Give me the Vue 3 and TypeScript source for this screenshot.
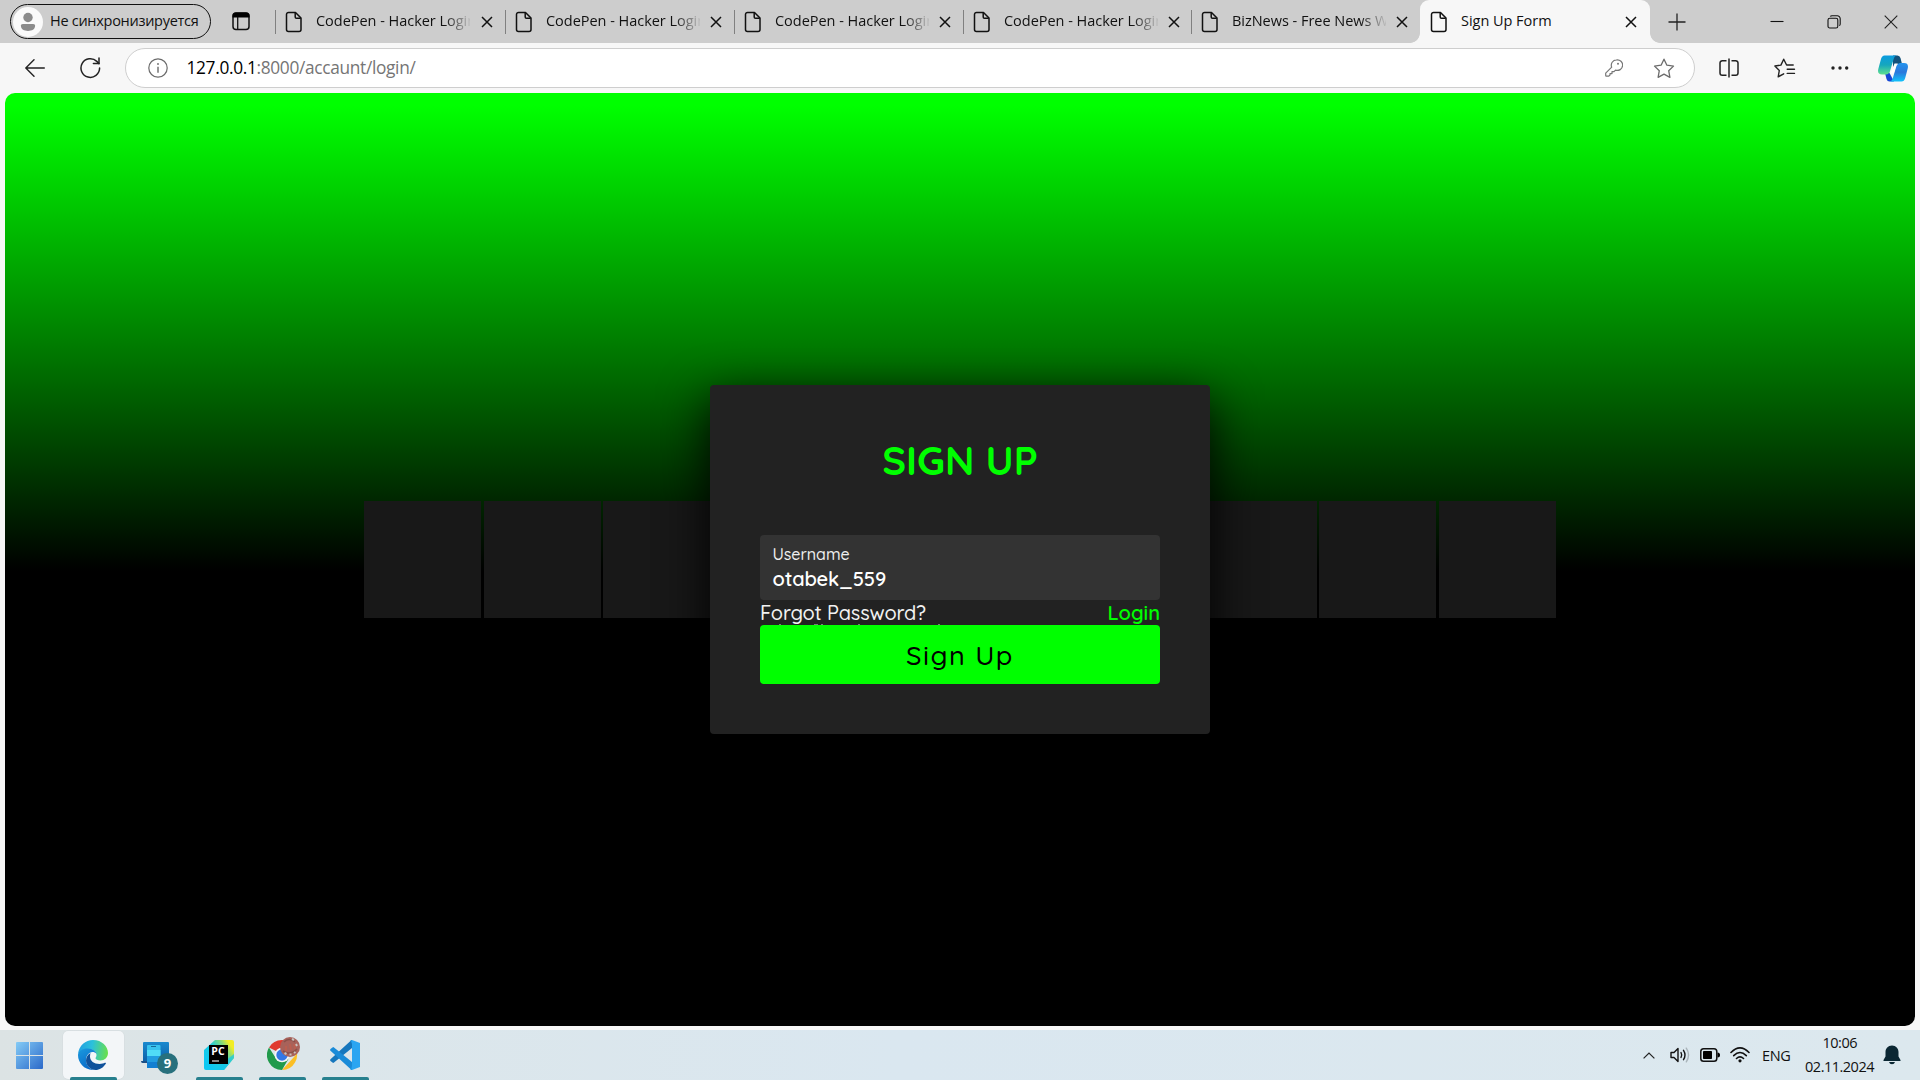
<script setup lang="ts">
interface Tab {
  title: string
  width: number
  active?: boolean
}

const tabs: Tab[] = [
  { title: 'CodePen - Hacker Login', width: 230 },
  { title: 'CodePen - Hacker Login', width: 229 },
  { title: 'CodePen - Hacker Login', width: 229 },
  { title: 'CodePen - Hacker Login', width: 228 },
  { title: 'BizNews - Free News Website', width: 229 },
  { title: 'Sign Up Form', width: 230, active: true },
]
</script>

<template>
  <div class="screen">
    <header class="tabstrip">
      <div class="profile">
        <svg class="avatar" width="30" height="30" viewBox="0 0 30 30">
          <circle cx="15" cy="15" r="15" fill="#fafafa" />
          <circle cx="15" cy="10.500" r="4.700" fill="#8b8b8b" />
          <path d="M9.800 17h10.400c1.200 0 1.900.7 1.900 1.800 0 3.400-3.200 5.200-7.100 5.200s-7.100-1.800-7.100-5.200c0-1.100.7-1.800 1.900-1.800z" fill="#8b8b8b" />
        </svg>
        <span class="profile-name">Не синхронизируется</span>
      </div>
      <svg class="workspace" width="18" height="19" viewBox="0 0 18 19" fill="none">
        <rect x="1" y="1" width="16" height="16.600" rx="3" stroke="#111" stroke-width="1.500" />
        <path d="M.5 5.500V4a3.500 3.500 0 0 1 3.500-3.500h10A3.500 3.500 0 0 1 17.500 4v1.500z" fill="#000" />
        <path d="M5.700 5v12" stroke="#111" stroke-width="1.300" />
      </svg>
      <div class="tabs">
        <div v-for="(tab, i) in tabs" :key="i" class="tab" :class="{ active: tab.active }" :style="{ width: tab.width + 'px' }">
          <svg class="file" width="18" height="22" viewBox="0 0 18 22" fill="none" stroke="#111" stroke-width="1.500" stroke-linejoin="round">
            <path d="M3.500 1.500h7L16 7v11.500a2 2 0 0 1-2 2H3.500a2 2 0 0 1-2-2v-15a2 2 0 0 1 2-2z" />
            <path d="M10.200 1.700V6a1.300 1.300 0 0 0 1.300 1.300h4.300" />
          </svg>
          <span class="tab-title">{{ tab.title }}</span>
          <svg class="close" width="12" height="12" viewBox="0 0 12 12" stroke="#111" stroke-width="1.500">
            <path d="M1 1l10 10M11 1L1 11" />
          </svg>
        </div>
      </div>
      <svg class="plus" width="18" height="18" viewBox="0 0 18 18" stroke="#222" stroke-width="1.300">
        <path d="M9 .5v17M.5 9h17" />
      </svg>
      <div class="window-controls">
        <svg width="14" height="14" viewBox="0 0 14 14" stroke="#111" stroke-width="1.100"><path d="M.5 6.500h13" /></svg>
        <svg width="14" height="14" viewBox="0 0 14 14" fill="none" stroke="#111" stroke-width="1.100">
          <rect x="1" y="3.200" width="9.800" height="9.800" rx="1.800" />
          <path d="M3.300 1.600Q3.700.8 5 .8h5.200a3 3 0 0 1 3 3v5.100q0 1-.9 1.700" />
        </svg>
        <svg width="14" height="14" viewBox="0 0 14 14" stroke="#222" stroke-width="1.100"><path d="M.7.7l12.600 12.600M13.300.7L.7 13.300" /></svg>
      </div>
    </header>

    <div class="toolbar">
      <svg class="back" width="20" height="18" viewBox="0 0 20 18" fill="none" stroke="#222" stroke-width="1.400" stroke-linecap="round" stroke-linejoin="round">
        <path d="M9 .8L.8 9 9 17.200M1 9h18.300" />
      </svg>
      <svg class="reload" width="21" height="22" viewBox="0 0 21 22" fill="none" stroke="#222" stroke-width="1.500" stroke-linecap="round" stroke-linejoin="round">
        <path d="M19.600 11a9.300 9.300 0 1 1-2.800-6.600L19 6.600" />
        <path d="M19 1v5.600h-5.600" />
      </svg>
      <div class="address">
        <svg class="info" width="20" height="20" viewBox="0 0 20 20" fill="none" stroke="#6b6b6b" stroke-width="1.200">
          <circle cx="10" cy="10" r="9.200" />
          <path d="M10 8.700v6" stroke-width="1.400" />
          <circle cx="10" cy="6" r=".9" fill="#6b6b6b" stroke="none" />
        </svg>
        <span class="url"><b>127.0.0.1</b>:8000/accaunt/login/</span>
        <svg class="key" width="18" height="18" viewBox="0 0 18 18" fill="none" stroke="#777" stroke-width="1.200" stroke-linejoin="round">
          <path d="M11.500.9a5.300 5.300 0 1 1-1 10.200l-1.500 1.500H7v2H5V16l-1.200 1.200H1.300q-.6 0-.6-.6v-2.400l6-6A5.300 5.300 0 0 1 11.500.9z" />
          <circle cx="13" cy="4.800" r="1" fill="#777" stroke="none" />
        </svg>
        <svg class="star" width="22" height="21" viewBox="0 0 22 21" fill="none" stroke="#6b6b6b" stroke-width="1.300" stroke-linejoin="round">
          <path d="M11 1.200l2.900 6 6.600.9-4.800 4.600 1.200 6.600-5.900-3.100-5.900 3.100 1.200-6.600L1.500 8.100l6.600-.9z" />
        </svg>
      </div>
      <div class="actions">
        <svg width="20" height="20" viewBox="0 0 20 20" fill="none" stroke="#222" stroke-width="1.500">
          <path d="M7.500 2.700H3.300A2.300 2.300 0 0 0 1 5v10a2.300 2.300 0 0 0 2.300 2.300h4.200M12.500 2.700h4.200A2.300 2.300 0 0 1 19 5v10a2.300 2.300 0 0 1-2.300 2.300h-4.200M10 .5v19" />
        </svg>
        <svg width="22" height="20" viewBox="0 0 22 20" fill="none" stroke="#222" stroke-width="1.400" stroke-linejoin="round" stroke-linecap="round">
          <path d="M9.700 15.800l-5.500 3 1.100-6.300L.9 8l6-.9L9.700 1.200 12.600 7h6.600M13.200 11.300h7.300M13.200 15.400h7.300" />
        </svg>
        <svg width="18" height="4" viewBox="0 0 18 4" fill="#222"><circle cx="2" cy="2" r="1.700" /><circle cx="9" cy="2" r="1.700" /><circle cx="15.700" cy="2" r="1.700" /></svg>
        <svg width="30" height="27" viewBox="0 0 30 27">
          <defs>
            <linearGradient id="cpA" x1="0" y1="0" x2="0" y2="1"><stop offset="0" stop-color="#0a9be0" /><stop offset=".5" stop-color="#16a7bd" /><stop offset="1" stop-color="#5fe08e" /></linearGradient>
            <linearGradient id="cpB" x1="0" y1="0" x2="0" y2="1"><stop offset="0" stop-color="#2494ee" /><stop offset=".5" stop-color="#2a78dc" /><stop offset="1" stop-color="#12c3fa" /></linearGradient>
          </defs>
          <path d="M15 .5h4.500q2.300 0 3 2.500l1.500 6h-5l-4 3z" fill="#13527c" />
          <path d="M7 18l4-1 5 9.500h-4.500q-2.300 0-3-2.500z" fill="#1748d5" />
          <path d="M6.500.5H19q-2.500 0-3.500 4l-3 10q-1 5-5 5H4q-5 0-3.700-5.500L3 4Q4 .5 6.500.5z" fill="url(#cpA)" />
          <path d="M23.500 26.500H11.500q2.500 0 3.500-4l3-10q1-4.500 4.500-4.500H26q5 0 3.700 5.500L27.200 23q-1 3.500-3.700 3.500z" fill="url(#cpB)" />
          <path d="M16.500 8.500h3.500q-1.500.8-2.200 3.300l-2 6.700h-3.800q1.300-1 2-3.500z" fill="#fff" />
        </svg>
      </div>
    </div>

    <main class="viewport">
      <div class="page">
        <div class="squares"><span v-for="n in 10" :key="n" class="square"></span></div>
        <section class="card">
          <h2>SIGN UP</h2>
          <div class="field">
            <label>Username</label>
            <span class="value">otabek_559</span>
          </div>
          <div class="links">
            <a class="forgot">Forgot Password?</a>
            <a class="login">Login</a>
          </div>
          <button class="submit">Sign Up</button>
          <!-- tops of the hint line hidden behind the button -->
          <svg class="hint" width="200" height="1" viewBox="0 0 200 1" fill="#7c7c7c">
            <path d="M19 0h2v1h-2zM54 0h4v1h-4zM61 0h2v1h-2zM98 0h2v1h-2zM178 0h2v1h-2z" />
          </svg>
        </section>
      </div>
    </main>

    <footer class="taskbar">
      <div class="apps">
        <div class="app start">
          <svg width="27" height="27" viewBox="0 0 27 27">
            <defs><linearGradient id="win" gradientUnits="userSpaceOnUse" x1="0" y1="0" x2="27" y2="27"><stop offset="0" stop-color="#84cbf6" /><stop offset="1" stop-color="#2b69c9" /></linearGradient></defs>
            <path d="M1 0h12v13H0V1q0-1 1-1zM14 0h12q1 0 1 1v12H14zM0 14h13v13H1q-1 0-1-1zM14 14h13v12q0 1-1 1H14z" fill="url(#win)" />
          </svg>
        </div>
        <div class="app running focused">
          <svg class="edge" width="30" height="30" viewBox="0 0 30 30">
            <defs>
              <linearGradient id="edA" x1="0" y1=".4" x2="1" y2=".5"><stop offset="0" stop-color="#209fe0" /><stop offset=".45" stop-color="#2bc0dc" /><stop offset="1" stop-color="#69e04b" /></linearGradient>
              <linearGradient id="edB" x1="0" y1="0" x2=".5" y2="1"><stop offset="0" stop-color="#1b9ade" /><stop offset="1" stop-color="#0a6ac8" /></linearGradient>
            </defs>
            <path d="M0 14C1 5.500 7.500 0 15 0c9 0 15 6.500 15 13 0 4.500-3.500 7.500-7.500 7.500-3 0-5-1-5-2.200 0-.8 1-1.300 1-3.300 0-3-3-6-8-6C5 9 1 11.500 0 14z" fill="url(#edA)" />
            <path d="M0 15c0-4 4.500-6.500 9.500-6.500 5.500 0 8.500 3 9 5.500-1-1.500-2.500-2-4-2C11 12 8 16 8 20c0 5 3.500 9 8.500 10C7 30.500 0 23.500 0 15z" fill="url(#edB)" />
            <path d="M12.500 13c-2.500 1.500-4.500 4-4.500 7.500 0 5.500 5 9.500 9.500 9.500 4 0 8-2.500 10.300-6.300.4-.7-.3-1.300-1-.9-1 .6-3 1.200-5.300 1.200-5.500 0-9.500-3-9.500-7.500 0-1.400.3-2.600.5-3.500z" fill="#10529b" />
          </svg>
        </div>
        <div class="app phone">
          <svg width="38" height="34" viewBox="0 0 38 34">
            <defs><linearGradient id="ph" x1="0" y1="0" x2="0" y2="1"><stop offset="0" stop-color="#1989cf" /><stop offset="1" stop-color="#0d5fa6" /></linearGradient></defs>
            <rect x="2" y="2" width="26" height="20" rx="1" fill="url(#ph)" />
            <path d="M0 21h10v2H1.500Q0 23 0 21z" fill="#1c4f86" />
            <rect x="6" y="5" width="13.500" height="23" rx="1" fill="#39c3ee" />
            <rect x="6" y="10" width="13.500" height="6" fill="#50dcf7" />
            <rect x="6" y="16" width="13.500" height="6" fill="#219de1" />
            <rect x="6" y="22" width="13.500" height="6" fill="#127fd2" />
            <path d="M10 6.500h5" stroke="#176b99" />
          </svg>
          <span class="badge">9</span>
        </div>
        <div class="app running">
          <svg class="edge" width="30" height="30" viewBox="0 0 30 30">
            <defs><linearGradient id="py" x1=".1" y1=".7" x2="1" y2=".1"><stop offset="0" stop-color="#0ec8f2" /><stop offset=".4" stop-color="#1fcddb" /><stop offset=".7" stop-color="#8bdd75" /><stop offset=".88" stop-color="#f2ed25" /></linearGradient></defs>
            <path d="M11 0h17q2 0 2 2v16L20 30H2q-2 0-2-2V10z" fill="url(#py)" />
            <path d="M30 14v4L20 30h-8l8-8z" fill="#12c6ee" opacity=".7" />
            <rect x="5" y="5" width="19" height="19" />
            <text x="7.300" y="15.300" class="pc">PC</text>
            <path d="M8 21h7" stroke="#ddd" stroke-width="1.200" />
          </svg>
        </div>
        <div class="app running">
          <svg class="chrome" width="34" height="34" viewBox="0 0 34 34">
            <path d="M15 18L2 11.500A15 15 0 0 1 28 11.500z" fill="#e03a2f" />
            <path d="M15 19H28.800L15 34a15 15 0 0 0 13-22.500H15z" fill="#fbbf26" />
            <path d="M2 11.500A15 15 0 0 0 15 34l6.500-11.300L9 22.500z" fill="#219a4b" />
            <circle cx="15" cy="19" r="7.300" fill="#f6f6f6" />
            <circle cx="15" cy="19" r="5.700" fill="#3478e5" />
            <circle cx="23" cy="11" r="10" fill="#a8625a" />
            <path d="M17 6q5-5 11 0M16 15q7 5 14-2" fill="none" stroke="#8a5049" stroke-width="1.600" />
            <path d="M19 10v5M23 8l1 6M27 8l1 5" fill="none" stroke="#bb5f50" stroke-width="2" />
            <path d="M17.500 17l2 1M22.500 18.500h2M27 17l1.500-1M25 3l2 1M29 8l1 2" stroke="#c9c2be" stroke-width="2" />
          </svg>
        </div>
        <div class="app running">
          <svg class="edge" width="30" height="30" viewBox="0 0 30 30">
            <path d="M22 0l8 3v24l-8 3z" fill="#2ba5f1" />
            <path d="M22 0v8L4 22.600q-.8.600-1.500 0L.5 20.900q-.8-.8 0-1.600L21 .5z" fill="#1677bd" />
            <path d="M22 30v-8L4 7.400q-.8-.6-1.500 0L.5 9.100q-.8.800 0 1.600L21 29.500z" fill="#1a8bd8" />
            <path d="M22 0q-1 0-1.600.6L22 4zM22 30q-1 0-1.600-.6L22 26z" fill="#209be7" />
          </svg>
        </div>
      </div>
      <div class="tray">
        <svg class="chev" width="12" height="7" viewBox="0 0 12 7" fill="none" stroke="#222" stroke-width="1.200"><path d="M.6 6.400L6 1l5.400 5.400" /></svg>
        <svg class="speaker" width="20" height="16" viewBox="0 0 20 16" fill="none" stroke="#111" stroke-width="1.400" stroke-linejoin="round" stroke-linecap="round">
          <path d="M1 5.500h3l4-4v13l-4-4H1zM11 5.500q1.400 2.500 0 5M13.500 3.300q3 4.700 0 9.400" />
          <path d="M16.300 1.200q4.500 6.800 0 13.600" stroke="#aab4ba" />
        </svg>
        <svg class="battery" width="20" height="14" viewBox="0 0 20 14"><rect x=".8" y=".8" width="16" height="12.400" rx="2.800" fill="none" stroke="#111" stroke-width="1.500" /><rect x="3" y="3" width="9" height="8" rx=".8" /><path d="M17.500 4.500q2.500 0 2.500 2.500t-2.500 2.500z" /></svg>
        <svg class="wifi" width="20" height="16" viewBox="0 0 20 16" fill="none" stroke="#111" stroke-width="1.600" stroke-linecap="round">
          <path d="M1 5.500Q10-3.800 19 5.500M3.700 8.600q6.300-6.200 12.600 0M6.500 11.500q3.500-3.200 7 0" /><circle cx="10" cy="13.800" r="1.600" fill="#111" stroke="none" />
        </svg>
        <span class="lang">ENG</span>
        <div class="clock"><span class="time">10:06</span><span class="date">02.11.2024</span></div>
        <svg class="bell" width="18" height="20" viewBox="0 0 18 20" fill="#0b2733"><path d="M9 .5c4 0 6.500 3 6.500 6.500v4.500l2 3.500v1H.5v-1l2-3.500V7C2.500 3.500 5 .5 9 .5zM6 17h6q-.6 2.200-3 2.200T6 17z" /></svg>
      </div>
    </footer>
  </div>
</template>

<style>
body { margin: 0; overflow: hidden; }
</style>

<style scoped>
.screen {
  width: 1920px;
  height: 1080px;
  display: flex;
  flex-direction: column;
  background: #f7f7f7;
  font-family: "Segoe UI", "Open Sans", "Noto Sans", sans-serif;
  color: #111;
  overflow: hidden;
}
svg { display: block; flex: none; }
span, label, a { white-space: nowrap; }

.tabstrip {
  height: 43px;
  flex: none;
  display: flex;
  align-items: center;
  background: #cdcdcd;
}
.profile {
  box-sizing: border-box;
  width: 201px;
  height: 35px;
  margin-left: 10px;
  border: 1px solid #111;
  border-radius: 18px;
  display: flex;
  align-items: center;
}
.avatar { margin-left: 2px; }
.profile-name { margin-left: 7px; padding-bottom: 2px; font-size: 14.5px; letter-spacing: -0.28px; }
.workspace { margin-left: 21px; }
.tabs { display: flex; margin-left: 25px; align-self: stretch; }
.tab {
  position: relative;
  box-sizing: border-box;
  display: flex;
  align-items: center;
  padding-left: 10px;
}
.tab:not(.active)::before {
  content: "";
  position: absolute;
  left: 0;
  top: 10px;
  width: 1px;
  height: 24px;
  background: #808080;
}
.tab.active {
  background: #f7f7f7;
  border-radius: 9px 9px 0 0;
}
.tab.active::before,
.tab.active::after {
  content: "";
  position: absolute;
  bottom: 0;
  width: 10px;
  height: 10px;
}
.tab.active::before { left: -10px; background: radial-gradient(circle at 0 0, transparent 9.5px, #f7f7f7 10.2px); }
.tab.active::after { right: -10px; background: radial-gradient(circle at 100% 0, transparent 9.5px, #f7f7f7 10.2px); }
.tab-title {
  width: 154px;
  margin-left: 13px;
  padding-bottom: 2px;
  overflow: hidden;
  font-size: 14.5px;
  letter-spacing: -0.03px;
  -webkit-mask-image: linear-gradient(90deg, #000 128px, transparent 156px);
  mask-image: linear-gradient(90deg, #000 128px, transparent 156px);
}
.tab.active .tab-title { -webkit-mask-image: none; mask-image: none; }
.close { margin-left: 10px; }
.tab:first-child .close { margin-left: 11px; }
.plus { margin-left: 18px; }
.window-controls { display: flex; margin-left: 83.500px; gap: 43px; }

.toolbar { height: 50px; flex: none; display: flex; align-items: center; }
.back { margin-left: 25px; }
.reload { margin-left: 35px; }
.address {
  box-sizing: border-box;
  width: 1570px;
  height: 40px;
  margin-left: 24px;
  border: 1px solid #cecece;
  border-radius: 20px;
  background: #fff;
  display: flex;
  align-items: center;
}
.info { margin-left: 22px; }
.url { margin-left: 18.500px; padding-bottom: 1px; flex: 1; font-size: 17.3px; color: #757575; letter-spacing: -0.32px; }
.url b { font-weight: 400; color: #000; }
.key { margin-right: 30px; }
.star { margin-right: 19px; }
.actions { display: flex; align-items: center; margin-left: 24px; }
.actions svg:nth-child(2) { margin-left: 35px; }
.actions svg:nth-child(3) { margin-left: 35px; }
.actions svg:nth-child(4) { margin-left: 29px; }

.viewport { height: 937px; flex: none; padding: 0 5px; box-sizing: border-box; }
.page {
  position: relative;
  height: 932.500px;
  border-radius: 10px;
  overflow: hidden;
  background: linear-gradient(#0f0 12px, #000 478px);
  display: flex;
  align-items: center;
  justify-content: center;
}
.squares {
  position: absolute;
  top: 408px;
  left: 359.2px;
  display: flex;
  gap: 2.375px;
}
.square { width: 117px; height: 117px; background: #181818; }
.card {
  position: relative;
  box-sizing: border-box;
  width: 500px;
  height: 349px;
  padding: 50px;
  border-radius: 4px;
  background: #222;
  box-shadow: 0 15px 50px #000;
  display: flex;
  flex-direction: column;
  font-family: Quicksand, Lato, sans-serif;
}
h2 {
  margin: 0;
  height: 50px;
  line-height: 50px;
  text-align: center;
  font-size: 40px;
  font-weight: 700;
  color: #0f0;
}
.field {
  box-sizing: border-box;
  height: 65px;
  margin-top: 50px;
  padding: 8px 12px 0 12.500px;
  border-radius: 4px;
  background: #333;
  display: flex;
  flex-direction: column;
}
.field label { font-size: 16px; line-height: 23px; color: #eee; font-weight: 500; letter-spacing: -0.05px; }
.field .value { font-size: 20px; line-height: 26px; color: #fff; font-weight: 600; letter-spacing: -0.2px; }
.links {
  height: 25px;
  display: flex;
  justify-content: space-between;
  font-size: 20px;
  line-height: 26px;
  font-weight: 500;
  color: #f2f2f2;
}
.forgot { letter-spacing: -0.16px; }
.login { color: #0f0; font-weight: 600; }
.submit {
  height: 59px;
  flex: none;
  padding: 1px 0 0;
  border: 0;
  border-radius: 4px;
  background: #0f0;
  color: #000;
  font: 500 27px/58px Quicksand, Lato, sans-serif;
  letter-spacing: 1.500px;
}
.hint { position: absolute; left: 50px; top: 239px; }

.taskbar {
  height: 50px;
  flex: none;
  display: flex;
  justify-content: space-between;
  background: linear-gradient(90deg, #dce3e4 0, #dce6ea 300px, #dae7f0 900px, #dce8ee 100%);
}
.apps { display: flex; }
.app {
  position: relative;
  width: 61px;
  height: 50px;
  margin-right: 2px;
  display: flex;
  align-items: center;
  justify-content: center;
}
.start { margin-right: 4px; width: 59px; }
.focused::before {
  content: "";
  position: absolute;
  inset: 1px 0 1px;
  border-radius: 5px;
  background: #f3f6f8;
  box-shadow: 0 0 0 0.5px #d3dadd;
}
.app svg { position: relative; }
.app .edge { left: -0.5px; }
.running::after {
  content: "";
  position: absolute;
  left: 7px;
  bottom: 0;
  width: 47px;
  height: 3px;
  border-radius: 2px 2px 0 0;
  background: #27808e;
}
.phone svg { left: 3px; top: 2px; }
.badge {
  position: absolute;
  left: 31px;
  top: 23px;
  width: 21px;
  height: 21px;
  border-radius: 50%;
  background: #28707d;
  color: #fff;
  font-size: 13px;
  font-weight: 700;
  line-height: 21px;
  text-align: center;
}
.pc { font: 700 10.500px "Open Sans", sans-serif; fill: #fff; }
.app .chrome { left: 1.5px; top: -2px; }
.tray { display: flex; align-items: center; font-size: 15px; }
.speaker { margin-left: 15px; }
.battery { margin-left: 10px; }
.wifi { margin-left: 10px; }
.lang { width: 28px; margin-left: 12px; font-size: 14.5px; letter-spacing: -0.4px; }
.clock {
  width: 72px;
  margin-left: 12px;
  display: flex;
  flex-direction: column;
  align-items: flex-end;
  line-height: 24px;
  font-size: 14.5px;
  letter-spacing: -0.5px;
}
.time { margin-right: 17px; }
.bell { margin: 0 19px 0 9px; }
</style>
